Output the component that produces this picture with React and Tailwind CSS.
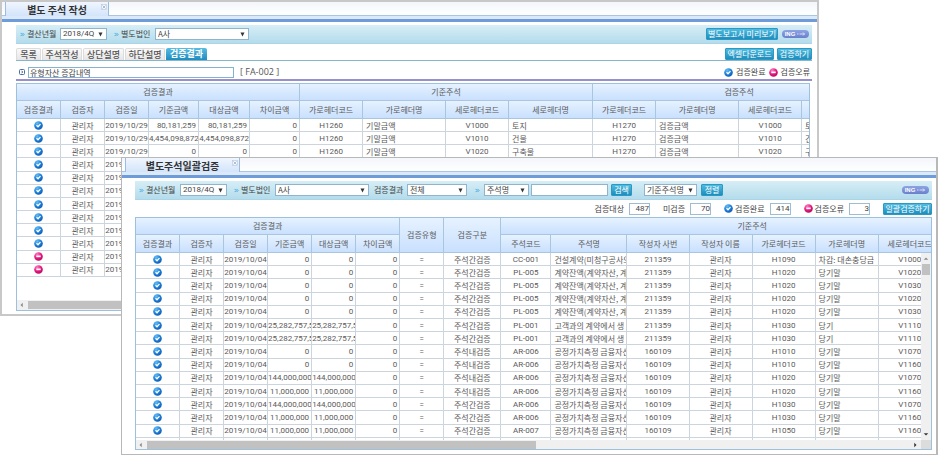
import React from "react";

const LABEL = "text-[8px] leading-[12px] text-[#444] whitespace-nowrap";
const NUM = "font-['Roboto','Noto_Sans_CJK_KR',sans-serif] text-[8px]";

function OkIcon() {
  return (
    <svg viewBox="0 0 18 18" className="size-[9px] shrink-0" role="img" aria-label="검증완료">
      <defs>
        <radialGradient id="ok" cx="0.35" cy="0.25" r="0.9">
          <stop offset="0" stopColor="#62bdf5" />
          <stop offset="0.5" stopColor="#1c7fd8" />
          <stop offset="1" stopColor="#0b4fa8" />
        </radialGradient>
      </defs>
      <circle cx="9" cy="9" r="8.6" fill="url(#ok)" />
      <path d="M5 8.600l3 3 5-5.400" fill="none" stroke="#fff" strokeWidth="2.6" />
    </svg>
  );
}

function ErrIcon() {
  return (
    <svg viewBox="0 0 18 18" className="size-[9px] shrink-0" role="img" aria-label="검증오류">
      <defs>
        <radialGradient id="err" cx="0.35" cy="0.25" r="0.9">
          <stop offset="0" stopColor="#ff7cc0" />
          <stop offset="0.5" stopColor="#e5187f" />
          <stop offset="1" stopColor="#a80458" />
        </radialGradient>
      </defs>
      <circle cx="9" cy="9" r="8.6" fill="url(#err)" />
      <rect x="4.6" y="7" width="8.8" height="3.4" fill="#fff" />
    </svg>
  );
}

function Chevrons() {
  return (
    <svg viewBox="0 0 8 8" className="size-[5px] shrink-0" aria-hidden="true">
      <path d="M1 1.500l2.500 2.500-2.500 2.500M4 1.500l2.500 2.500-2.500 2.500" fill="none" stroke="#4aa8dc" strokeWidth="1.6" />
    </svg>
  );
}

function Arrow({ dir, dark }) {
  const paths = { left: "M5 1v6L2 4z", right: "M3 1v6l3-3z", up: "M1 5h6L4 2z", down: "M1 3h6L4 6z" };
  return (
    <svg viewBox="0 0 8 8" className="size-[6px] shrink-0" aria-hidden="true">
      <path d={paths[dir]} fill={dark ? "#333" : "#8a8a8a"} />
    </svg>
  );
}

function Select({ label, value, className }) {
  return (
    <div className={"grid shrink-0 items-center " + className}>
      <select
        aria-label={label}
        className={"col-start-1 row-start-1 h-[12px] w-full appearance-none rounded-none border border-[#8fb4cc] bg-white py-0 pl-[2px] pr-2 leading-[10px] text-[#444] " + (/\d/.test(value) ? NUM : "text-[8px]")}
      >
        <option>{value}</option>
      </select>
      <svg viewBox="0 0 10 10" className="pointer-events-none col-start-1 row-start-1 mr-1 size-[5px] justify-self-end" aria-hidden="true">
        <path d="M1 1h8L5 9z" fill="#333" />
      </svg>
    </div>
  );
}

function Button({ children, className }) {
  return (
    <button
      type="button"
      className={"flex h-[12px] shrink-0 items-center justify-center whitespace-nowrap rounded-[1px] border border-[#2a9ac4] bg-linear-to-b from-[#4fbce0] to-[#1b8dbd] text-[8px] leading-[10px] text-white " + className}
    >
      {children}
    </button>
  );
}

function IngBadge() {
  return (
    <span className="mr-[3px] flex h-[8px] w-[27px] shrink-0 items-center justify-center gap-[2px] rounded-full bg-linear-to-b from-[#8fa4e4] to-[#6a80cc] font-['Liberation_Sans',sans-serif] text-[6px] leading-[8px] font-bold text-white">
      ING
      <svg viewBox="0 0 18 8" className="h-[4px] w-[9px]" aria-hidden="true">
        <path d="M0 4h3M5 4h10M12 1l3 3-3 3" fill="none" stroke="#fff" strokeWidth="1.4" />
      </svg>
    </span>
  );
}

function WindowTab({ title, className }) {
  return (
    <>
      <div className="flex h-[14px] border-b border-[#a9c4e4] bg-linear-to-b from-[#f3f6fb] to-white pl-[3px]">
        <div className={"flex h-[14px] items-center justify-center border-x border-[#9dbbe0] bg-linear-to-b from-[#f0f6fe] to-[#d3e4fa] pl-[7px] " + className}>
          <span className="grow text-center text-[10px] leading-[13px] font-bold whitespace-nowrap text-[#333]">{title}</span>
          <button type="button" aria-label="탭 닫기" className="mr-[1px] self-start pt-[2px]">
            <svg viewBox="0 0 12 12" className="size-[6px]" aria-hidden="true">
              <rect x="0.7" y="0.7" width="10.6" height="10.6" fill="#f4f8fd" stroke="#b4c5dc" strokeWidth="1.2" />
              <path d="M3 3l6 6M9 3L3 9" stroke="#9badc8" strokeWidth="1.6" />
            </svg>
          </button>
        </div>
      </div>
      <div className="h-[3px] bg-[#dce9f9]" />
      <div className="h-[3px] bg-[#6e9cd8]" />
    </>
  );
}

const headCell = "overflow-hidden border-r border-b border-[#a9c6e0] bg-linear-to-b from-[#e6f2ff] to-[#c9e0fe] p-0 text-center text-[8px] leading-[10px] font-normal whitespace-nowrap text-[#5a5a5a]";

function Cell({ kind, children }) {
  const base = "overflow-hidden border-r border-b border-[#ccd5de] p-0 leading-[11px] whitespace-nowrap text-[#5a5a5a] ";
  if (kind === "icon") {
    return (
      <td className={base}>
        <div className="flex justify-center">{children === "err" ? <ErrIcon /> : <OkIcon />}</div>
      </td>
    );
  }
  if (kind === "num") {
    const wide = String(children).length > 10;
    return <td className={base + "text-right " + (wide ? "" : "pr-[2px] ") + NUM}>{children}</td>;
  }
  if (kind === "code") return <td className={base + "text-center " + NUM}>{children}</td>;
  if (kind === "left") return <td className={base + "pl-[3px] text-left text-[8px]"}>{children}</td>;
  return <td className={base + "text-center text-[8px]"}>{children}</td>;
}

function Grid({ cols, groups, rows, className, trailing }) {
  return (
    <table className={"w-full table-fixed border-separate border-spacing-0 " + className}>
      <colgroup>
        {cols.map((c, i) => (
          <col key={i} className={c.w} />
        ))}
      </colgroup>
      <thead>
        <tr className="h-[17px]">
          {groups.map((g) => (
            <th key={g.name} colSpan={g.span} rowSpan={g.tall ? 2 : 1} className={headCell}>
              {g.name}
            </th>
          ))}
        </tr>
        <tr className="h-[18px]">
          {cols.filter((c) => !c.tall).map((c, i) => (
            <th key={i} className={headCell}>
              {c.name}
            </th>
          ))}
        </tr>
      </thead>
      <tbody>
        {rows.map((r, i) => (
          <tr key={i}>
            {r.map((v, j) => (
              <Cell key={j} kind={cols[j].kind}>
                {v}
              </Cell>
            ))}
          </tr>
        ))}
        {trailing && (
          <tr className="h-[2px]">
            {cols.map((c, i) => (
              <td key={i} className="border-r border-[#ccd5de] p-0" />
            ))}
          </tr>
        )}
      </tbody>
    </table>
  );
}

const noteCols = [
  { name: "검증결과", w: "w-[44px]", kind: "icon" },
  { name: "검증자", w: "w-[44px]" },
  { name: "검증일", w: "w-[44px]", kind: "code" },
  { name: "기준금액", w: "w-[50px]", kind: "num" },
  { name: "대상금액", w: "w-[51px]", kind: "num" },
  { name: "차이금액", w: "w-[50px]", kind: "num" },
  { name: "가로헤더코드", w: "w-[63px]", kind: "code" },
  { name: "가로헤더명", w: "w-[83px]", kind: "left" },
  { name: "세로헤더코드", w: "w-[63px]", kind: "code" },
  { name: "세로헤더명", w: "w-[84px]", kind: "left" },
  { name: "가로헤더코드", w: "w-[63px]", kind: "code" },
  { name: "가로헤더명", w: "w-[83px]", kind: "left" },
  { name: "세로헤더코드", w: "w-[63px]", kind: "code" },
  { name: "", w: "w-[84px]", kind: "left" },
];

const noteItems = [
  ["80,181,259", "V1000", "토지"],
  ["4,454,098,872", "V1010", "건물"],
  ["0", "V1020", "구축물"],
];

const noteRows = Array.from({ length: 12 }, (_, i) => {
  const [amount, code, name] = noteItems[i] || ["", "", ""];
  const shown = i < noteItems.length;
  return [
    i > 9 ? "err" : "ok", "관리자", "2019/10/29", amount, amount, shown ? "0" : "",
    shown ? "H1260" : "", shown ? "기말금액" : "", code, name,
    shown ? "H1270" : "", shown ? "검증금액" : "", code, name,
  ];
});

const batchCols = [
  { name: "검증결과", w: "w-[44px]", kind: "icon" },
  { name: "검증자", w: "w-[44px]" },
  { name: "검증일", w: "w-[44px]", kind: "code" },
  { name: "기준금액", w: "w-[44px]", kind: "num" },
  { name: "대상금액", w: "w-[44px]", kind: "num" },
  { name: "차이금액", w: "w-[44px]", kind: "num" },
  { name: "검증유형", w: "w-[44px]", kind: "code", tall: true },
  { name: "검증구분", w: "w-[57px]", tall: true },
  { name: "주석코드", w: "w-[50px]", kind: "code" },
  { name: "주석명", w: "w-[76px]", kind: "left" },
  { name: "작성자 사번", w: "w-[62px]", kind: "code" },
  { name: "작성자 이름", w: "w-[63px]" },
  { name: "가로헤더코드", w: "w-[63px]", kind: "code" },
  { name: "가로헤더명", w: "w-[63px]", kind: "left" },
  { name: "세로헤더코드", w: "w-[63px]", kind: "code" },
  { name: "", w: "w-[62px]" },
];

const CONTRACT = "계약잔액(계약자산, 계";
const CUSTOMER = "고객과의 계약에서 생";
const FAIR = "공정가치측정 금융자산";
const BETWEEN = "주석간검증";
const WITHIN = "주석내검증";

const batchRows = [
  ["0", BETWEEN, "CC-001", "건설계약(미청구공사의", "211359", "H1090", "차감: 대손충당금", "V1000"],
  ["0", BETWEEN, "PL-005", CONTRACT, "211359", "H1020", "당기말", "V1020"],
  ["0", BETWEEN, "PL-005", CONTRACT, "211359", "H1020", "당기말", "V1030"],
  ["0", BETWEEN, "PL-005", CONTRACT, "211359", "H1020", "당기말", "V1020"],
  ["0", BETWEEN, "PL-005", CONTRACT, "211359", "H1020", "당기말", "V1030"],
  ["25,282,757,5", BETWEEN, "PL-001", CUSTOMER, "211359", "H1030", "당기", "V1110"],
  ["25,282,757,5", BETWEEN, "PL-001", CUSTOMER, "211359", "H1030", "당기", "V1110"],
  ["0", WITHIN, "AR-006", FAIR, "160109", "H1010", "당기말", "V1070"],
  ["0", WITHIN, "AR-006", FAIR, "160109", "H1010", "당기말", "V1160"],
  ["144,000,000", WITHIN, "AR-006", FAIR, "160109", "H1020", "당기말", "V1070"],
  ["11,000,000", WITHIN, "AR-006", FAIR, "160109", "H1020", "당기말", "V1160"],
  ["144,000,000", BETWEEN, "AR-006", FAIR, "160109", "H1030", "당기말", "V1070"],
  ["11,000,000", BETWEEN, "AR-006", FAIR, "160109", "H1030", "당기말", "V1160"],
  ["11,000,000", BETWEEN, "AR-007", FAIR, "160109", "H1050", "당기말", "V1160"],
].map(([amount, type, code, name, id, hCode, hName, vCode]) => [
  "ok", "관리자", "2019/10/04", amount, amount, "0", "=", type, code, name, id, "관리자", hCode, hName, vCode, "",
]);

const bar = "flex h-[19px] items-center border-b border-[#a9d5e6] bg-linear-to-b from-[#d6eef6] to-[#b4dcec]";

function Stat({ id, label, value, icon }) {
  return (
    <div className="flex shrink-0 items-center gap-[5px]">
      <label htmlFor={id} className={"flex items-center gap-[2px] " + LABEL}>
        {icon}
        {label}
      </label>
      <input
        id={id}
        readOnly
        defaultValue={value}
        className={"h-[12px] w-[21px] border border-[#9fbdd2] bg-white p-0 text-right leading-[10px] text-[#444] " + NUM}
      />
    </div>
  );
}

function NoteWindow() {
  const tabs = [["목록", "w-[25px]"], ["주석작성", "w-[40px]"], ["상단설명", "w-[41px]"], ["하단설명", "w-[40px]"]];
  return (
    <section className="col-start-1 row-start-1 mr-[119px] min-w-0 self-start border-2 border-[#c8c8c8] bg-white">
      <WindowTab title="별도 주석 작성" className="w-[104px]" />
      <div className="pt-[3px] pr-[5px] pb-[3px] pl-[14px]">
        <div className={bar + " pl-1"}>
          <Chevrons />
          <span className={"ml-[2px] w-[33px] " + LABEL}>결산년월</span>
          <Select label="결산년월" value="2018/4Q" className="w-[47px]" />
          <span className="w-[7px]" />
          <Chevrons />
          <span className={"ml-[2px] w-[34px] " + LABEL}>별도법인</span>
          <Select label="별도법인" value="A사" className="w-[94px]" />
          <div className="ml-auto flex items-center gap-1">
            <Button className="w-[72px]">별도보고서 미리보기</Button>
            <IngBadge />
          </div>
        </div>
        <div className="mt-1 flex h-[13px] items-end gap-px border-b border-[#86b6cc]">
          {tabs.map(([name, w]) => (
            <button
              key={name}
              type="button"
              className={"h-[12px] rounded-t-[2px] border border-b-0 border-[#dcdcdc] bg-linear-to-b from-[#fafafa] to-[#e6e6e6] text-[9px] leading-[12px] font-medium whitespace-nowrap text-[#555] " + w}
            >
              {name}
            </button>
          ))}
          <button
            type="button"
            className="h-[12px] w-[41px] rounded-t-[2px] bg-linear-to-b from-[#56bce2] to-[#1c8cc0] text-[9px] leading-[12px] font-bold whitespace-nowrap text-white"
          >
            검증결과
          </button>
          <div className="ml-auto flex gap-[3px]">
            <Button className="w-[49px]">엑셀다운로드</Button>
            <Button className="w-[35px]">검증하기</Button>
          </div>
        </div>
        <div className="flex h-[20px] items-center border-b-2 border-[#9691cc] pt-1 pl-[3px]">
          <svg viewBox="0 0 12 12" className="size-[6px] shrink-0" aria-hidden="true">
            <rect x="1" y="1" width="10" height="10" rx="2" fill="#fff" stroke="#4a6ea2" strokeWidth="2" />
            <path d="M5 3.500L7.500 6 5 8.500" fill="none" stroke="#2c4f85" strokeWidth="1.8" />
          </svg>
          <input
            aria-label="주석명"
            defaultValue="유형자산 증감내역"
            className="ml-[3px] h-[11px] w-[206px] border border-[#85b2cc] bg-white px-[1px] py-0 text-[8px] leading-[9px] text-[#444]"
          />
          <span className="ml-[6px] font-['Open_Sans',sans-serif] text-[9px] leading-[12px] whitespace-nowrap text-[#555]">[ FA-002 ]</span>
          <div className={"mr-[2px] ml-auto flex items-center gap-[3px] " + LABEL}>
            <OkIcon />
            검증완료
            <ErrIcon />
            검증오류
          </div>
        </div>
        <div className="mt-[2px] mr-[2px] overflow-hidden border border-[#9dc0dc]">
          <Grid
            className="h-[193px] min-w-[869px]"
            cols={noteCols}
            groups={[{ name: "검증결과", span: 6 }, { name: "기준주석", span: 4 }, { name: "검증주석", span: 4 }]}
            rows={noteRows}
          />
          <div className="mt-[23px] flex h-[10px] items-center bg-[#f0f0f0] pl-[2px]">
            <Arrow dir="left" />
            <div className="ml-[3px] h-[8px] w-1/2 bg-[#c1c1c1]" />
          </div>
        </div>
      </div>
    </section>
  );
}

function BatchWindow() {
  return (
    <section className="col-start-1 row-start-1 mt-[157px] ml-[121px] min-w-0 self-start border border-r-2 border-[#b8b8b8] bg-white">
      <WindowTab title="별도주석일괄검증" className="w-[115px]" />
      <div className="pt-[3px] pr-1 pb-1 pl-[13px]">
        <div className={bar + " pl-1"}>
          <Chevrons />
          <span className={"ml-[2px] w-[34px] " + LABEL}>결산년월</span>
          <Select label="결산년월" value="2018/4Q" className="w-[47px]" />
          <span className="w-[7px]" />
          <Chevrons />
          <span className={"ml-[2px] w-[34px] " + LABEL}>별도법인</span>
          <Select label="별도법인" value="A사" className="w-[94px]" />
          <span className={"ml-[5px] w-[33px] " + LABEL}>검증결과</span>
          <Select label="검증결과" value="전체" className="w-[60px]" />
          <span className="w-[8px]" />
          <Chevrons />
          <span className="w-[4px]" />
          <Select label="검색조건" value="주석명" className="w-[45px]" />
          <input aria-label="검색어" className="ml-[2px] h-[12px] w-[77px] shrink-0 border border-[#8fb4cc] bg-white px-[2px] text-[8px]" />
          <Button className="ml-[3px] w-[21px]">검색</Button>
          <span className="w-[12px]" />
          <Select label="정렬기준" value="기준주석명" className="w-[53px]" />
          <span className="w-[4px]" />
          <Button className="w-[22px]">정렬</Button>
          <div className="ml-auto">
            <IngBadge />
          </div>
        </div>
        <div className="flex h-[17px] items-center justify-end gap-[13px]">
          <Stat id="total" label="검증대상" value="487" />
          <Stat id="pending" label="미검증" value="70" />
          <Stat id="done" label="검증완료" value="414" icon={<OkIcon />} />
          <Stat id="failed" label="검증오류" value="3" icon={<ErrIcon />} />
          <Button className="w-[49px]">일괄검증하기</Button>
        </div>
        <div className="overflow-hidden border border-[#9dc0dc]">
          <div className="grid">
            <div className="col-start-1 row-start-1 min-w-0 overflow-hidden">
              <Grid
                className="h-[222px] min-w-[868px]"
                cols={batchCols}
                groups={[
                  { name: "검증결과", span: 6 },
                  { name: "검증유형", span: 1, tall: true },
                  { name: "검증구분", span: 1, tall: true },
                  { name: "기준주석", span: 8 },
                ]}
                rows={batchRows}
                trailing
              />
            </div>
            <div className="z-10 col-start-1 row-start-1 mt-[35px] flex w-[10px] flex-col items-center justify-self-end bg-[#f0f0f0] py-[3px]">
              <Arrow dir="up" />
              <div className="mt-[2px] h-[11px] w-[8px] bg-[#c1c1c1]" />
              <div className="grow" />
              <Arrow dir="down" dark />
            </div>
          </div>
          <div className="flex h-[9px] items-center bg-[#f0f0f0] pl-[2px]">
            <Arrow dir="left" />
            <div className="ml-[3px] h-[8px] w-[49%] bg-[#c1c1c1]" />
            <div className="grow" />
            <Arrow dir="right" dark />
            <div className="ml-[3px] h-[9px] w-[10px] bg-[#dcdcdc]" />
          </div>
        </div>
      </div>
    </section>
  );
}

export default function App() {
  return (
    <main className="grid min-h-screen grid-cols-1 bg-white font-['Noto_Sans_CJK_KR',sans-serif]">
      <NoteWindow />
      <BatchWindow />
    </main>
  );
}
